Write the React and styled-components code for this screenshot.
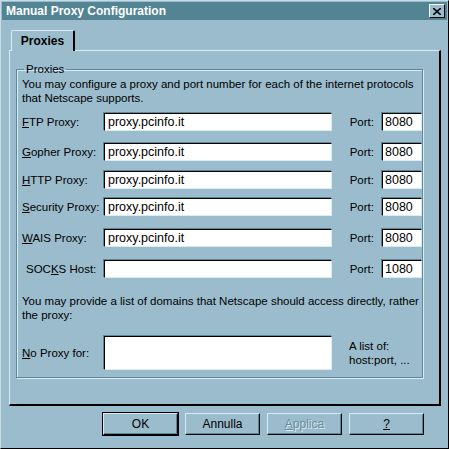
import React from 'react';
import styled, { createGlobalStyle } from 'styled-components';

const Global = createGlobalStyle`
  html, body { margin: 0; padding: 0; background: #9bbccc; }
  body { font-family: "Liberation Sans", Arial, sans-serif; font-size: 11.5px; color: #000; }
`;

const Window = styled.div`
  width: 449px;
  height: 449px;
  box-sizing: border-box;
  background: #9bbccc;
  border: 1px solid #c8dce4;
  border-right-color: #000;
  border-bottom-color: #000;
  padding: 1px;
  display: flex;
  flex-direction: column;
  overflow: hidden;
`;

const TitleBar = styled.div`
  height: 18px;
  background: #538494;
  color: #fff;
  font-weight: bold;
  font-size: 12px;
  display: flex;
  align-items: center;
  justify-content: space-between;
  padding: 0 2px 0 4px;
`;

const CloseBox = styled.div`
  width: 14px;
  height: 12px;
  background: #9bbccc;
  border: 1px solid #fff;
  border-right-color: #000;
  border-bottom-color: #000;
  color: #000;
  display: flex;
  align-items: center;
  justify-content: center;
`;

const Body = styled.div`
  padding: 10px 6px 0 7px;
  display: flex;
  flex-direction: column;
`;

const TabStrip = styled.div`
  display: flex;
  padding-left: 2px;
  position: relative;
  z-index: 1;
`;

const Tab = styled.div`
  width: 64px;
  height: 21px;
  box-sizing: border-box;
  border: 1px solid #d8ecf4;
  border-right: 2px solid #000;
  border-bottom: none;
  border-radius: 2px 2px 0 0;
  background: #9bbccc;
  font-weight: bold;
  font-size: 12px;
  display: flex;
  align-items: center;
  justify-content: center;
  margin-bottom: -1px;
`;

const Panel = styled.div`
  height: 356px;
  box-sizing: border-box;
  border: 1px solid #d8ecf4;
  border-right: 2px solid #000;
  border-bottom: 2px solid #000;
  padding: 12px 16px 0 6px;
`;

const Group = styled.fieldset`
  margin: 0;
  min-width: 0;
  height: 315px;
  box-sizing: border-box;
  border: 1px solid #5a8898;
  box-shadow: 1px 1px 0 #d8ecf4, inset 1px 1px 0 #d8ecf4;
  padding: 0 0 0 5px;
  overflow: hidden;
  legend {
    padding: 0 2px;
    margin-left: 2px;
  }
`;

const Para = styled.p`
  margin: ${(p) => p.$top || 0}px 0 0;
  line-height: 14px;
  white-space: ${(p) => (p.$nowrap ? 'nowrap' : 'normal')};
`;

const Row = styled.div`
  display: flex;
  align-items: center;
  margin-top: ${(p) => p.$top}px;
  height: 18px;
`;

const Label = styled.label`
  width: 82px;
  flex: none;
  padding-left: ${(p) => (p.$indent ? 4 : 0)}px;
  box-sizing: border-box;
`;

const Field = styled.div`
  width: 228px;
  flex: none;
  height: ${(p) => p.$h || 18}px;
  box-sizing: border-box;
  background: #fff;
  border: 1px solid #000;
  border-right-color: #d8ecf4;
  border-bottom-color: #d8ecf4;
  box-shadow: -1px -1px 0 #5a8898;
  padding: 1px 3px;
  font-size: 12.5px;
`;

const PortLabel = styled.span`
  width: 42px;
  flex: none;
  text-align: right;
`;

const PortField = styled(Field)`
  width: 40px;
  margin-left: 8px;
  padding: 1px 2px;
`;

const NoProxyRow = styled.div`
  display: flex;
  align-items: center;
  margin-top: 14px;
`;

const Hint = styled.div`
  margin-left: 17px;
  line-height: 14px;
  white-space: nowrap;
`;

const Buttons = styled.div`
  display: flex;
  gap: 7px;
  padding: 7px 0 0 94px;
`;

const Button = styled.button`
  width: 75px;
  height: 22px;
  box-sizing: border-box;
  background: #9bbccc;
  font-family: inherit;
  font-size: 12px;
  border: 1px solid #d8ecf4;
  border-right-color: #000;
  border-bottom-color: #000;
  box-shadow: inset -1px -1px 0 #5a8898;
  outline: ${(p) => (p.$default ? '1px solid #000' : 'none')};
  color: ${(p) => (p.$disabled ? '#6c8c9c' : '#000')};
  text-shadow: ${(p) => (p.$disabled ? '1px 1px 0 #d8ecf4' : 'none')};
  padding: 0;
`;

const rows = [
  { k: 'F', rest: 'TP Proxy:', v: 'proxy.pcinfo.it', port: '8080', top: 8 },
  { k: 'G', rest: 'opher Proxy:', v: 'proxy.pcinfo.it', port: '8080', top: 12 },
  { k: 'H', rest: 'TTP Proxy:', v: 'proxy.pcinfo.it', port: '8080', top: 10 },
  { k: 'S', rest: 'ecurity Proxy:', v: 'proxy.pcinfo.it', port: '8080', top: 9 },
  { k: 'W', rest: 'AIS Proxy:', v: 'proxy.pcinfo.it', port: '8080', top: 13 },
];

export default function App() {
  return (
    <Window>
      <Global />
      <TitleBar>
        Manual Proxy Configuration
        <CloseBox>
          <svg width="8" height="7" viewBox="0 0 8 7">
            <path d="M0 0L8 7M8 0L0 7" stroke="#000" strokeWidth="1.6" />
          </svg>
        </CloseBox>
      </TitleBar>
      <Body>
        <TabStrip>
          <Tab>Proxies</Tab>
        </TabStrip>
        <Panel>
          <Group>
            <legend>Proxies</legend>
            <Para $top={2}>
              You may configure a proxy and port number for each of the internet protocols that Netscape supports.
            </Para>
            {rows.map((r) => (
              <Row key={r.k} $top={r.top}>
                <Label>
                  <u>{r.k}</u>
                  {r.rest}
                </Label>
                <Field>{r.v}</Field>
                <PortLabel>Port:</PortLabel>
                <PortField>{r.port}</PortField>
              </Row>
            ))}
            <Row $top={13}>
              <Label $indent>
                SOC<u>K</u>S Host:
              </Label>
              <Field />
              <PortLabel>Port:</PortLabel>
              <PortField>1080</PortField>
            </Row>
            <Para $top={16} $nowrap>
              You may provide a list of domains that Netscape should access directly, rather than via
            </Para>
            <Para>the proxy:</Para>
            <NoProxyRow>
              <Label>
                <u>N</u>o Proxy for:
              </Label>
              <Field $h={34} />
              <Hint>
                A list of:
                <br />
                host:port, ...
              </Hint>
            </NoProxyRow>
          </Group>
        </Panel>
        <Buttons>
          <Button $default>OK</Button>
          <Button>Annulla</Button>
          <Button $disabled>
            <u>A</u>pplica
          </Button>
          <Button>
            <u>?</u>
          </Button>
        </Buttons>
      </Body>
    </Window>
  );
}
